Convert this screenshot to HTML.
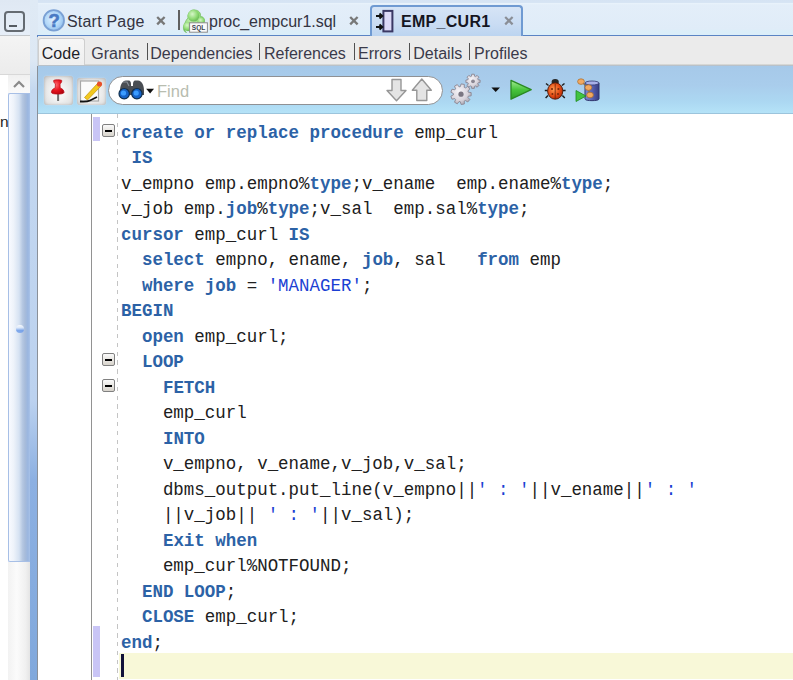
<!DOCTYPE html>
<html><head><meta charset="utf-8">
<style>
*{margin:0;padding:0;box-sizing:border-box}
html,body{width:793px;height:680px;overflow:hidden;background:#fff;position:relative;font-family:"Liberation Sans",sans-serif}
.a{position:absolute}
/* left panel */
#lp-top{left:0;top:0;width:30px;height:35px;background:linear-gradient(#dfe8f3,#e6eef8)}
#lp-line{left:0;top:35px;width:30px;height:1px;background:#c4c8cc}
#lp-mid{left:0;top:36px;width:30px;height:38px;background:linear-gradient(#f4f4f4,#ececec)}
#lp-line2{left:0;top:74px;width:30px;height:1px;background:#d8d8d8}
#lp-bot{left:0;top:75px;width:30px;height:605px;background:#fff}
#minbtn{left:4px;top:11px;width:21px;height:21px;border:2px solid #656b72;border-radius:4px}
#minbtn i{position:absolute;left:3px;top:12px;width:8px;height:2.4px;background:#555b62}
#sb-up{left:8px;top:75px;width:22px;height:18px;background:linear-gradient(#f0f0f0,#fafafa)}
#thumb{left:8px;top:93px;width:22px;height:469px;border:1px solid #a7bfe6;border-right:none;border-radius:2px 0 0 2px;background:linear-gradient(90deg,#f8faff 0%,#eef3fa 22%,#d6e2f2 48%,#b6c8e2 64%,#a8bcda 76%,#9ab6e0 90%,#a8c2e8 100%)}
#track{left:8px;top:562px;width:22px;height:118px;background:linear-gradient(90deg,#f2f2f2,#fbfbfb 40%,#f0f0f0 80%,#e4e4e4)}
#strip{left:30px;top:0;width:8px;height:680px;background:linear-gradient(#dfeaf5 0,#dde8f4 60px,#c4d8f0 90px,#bcd2ef 400px,#8cb0e2 480px,#80a8dc 680px)}
#strip-l{left:37px;top:66px;width:1px;height:614px;background:#8a9098}
#strip-l2{left:37px;top:36px;width:1px;height:30px;background:#d0d8e0}
/* tab bar */
#tabbar{left:38px;top:0;width:755px;height:36px;background:linear-gradient(#d5e3f3 0,#d7e5f4 2.5px,#e8f2fb 3.5px,#e3eef9 5px,#e0ecf8 29px,#dbeef9 31px,#dbeef9 34px)}
#tabline{left:37px;top:34.5px;width:756px;height:2px;background:#5a84c4}
.tabtxt{position:absolute;font-size:16px;color:#343442;white-space:nowrap;line-height:20px}
.closex{position:absolute;font-size:13px;font-weight:bold;color:#777;line-height:12px}
#acttab{left:370px;top:5px;width:153px;height:31px;border:2px solid #6f9ad2;border-bottom:none;border-radius:4px 4px 0 0;background:linear-gradient(#d6e4f6,#c9dcf3 60%,#bcd4f0)}
/* subtab bar */
#subbar{left:38px;top:36px;width:755px;height:30px;background:#ebebeb}
#subline{left:38px;top:64px;width:755px;height:2px;background:linear-gradient(#e6e2da,#a9b6c4)}
#codetab{left:38px;top:38px;width:47px;height:27px;background:linear-gradient(#f6f6f6,#efefef);border:1px solid #cfcfcf;border-bottom:none;border-radius:3px 3px 0 0}
.sub{position:absolute;top:43.7px;font-size:16px;color:#3a3a4a;line-height:20px;white-space:nowrap}
.sep{position:absolute;top:43px;width:1px;height:17px;background:#505050}
/* toolbar */
#toolbar{left:38px;top:66px;width:755px;height:48px;background:linear-gradient(#a6c9e9 0,#a9cdec 40%,#acd8f2 75%,#b6e4f8 100%)}
#tbline{left:38px;top:113px;width:755px;height:1px;background:#9cc4dc}
.btn{position:absolute;border-radius:3px;background:radial-gradient(ellipse at 50% 55%,#f6f6f6 25%,#e4e4e4 70%,#c8c8c8 100%);box-shadow:0 0 1.5px #d8e4ee, inset 0 0 3px #b4b4b4}
#find{left:108px;top:75.6px;width:335px;height:29px;border:1.7px solid #8f9194;border-radius:15px;background:#fff}
#findtxt{left:157px;top:80.6px;font-size:16.5px;color:#b8bdb0;line-height:20px}
/* editor */
#gutline{left:91px;top:114px;width:1.3px;height:566px;background:#929292}
#dash{left:116.5px;top:114px;width:1.5px;height:566px;background:repeating-linear-gradient(#c4c4c4 0,#c4c4c4 4.4px,transparent 4.4px,transparent 8.8px)}
.lav{position:absolute;left:93px;width:7px;background:#c9c5f6}
#curline{left:119px;top:653px;width:674px;height:26px;background:#f8f8d8}
#caret{left:121px;top:653.5px;width:2.6px;height:23px;background:#12123a}
.fold{position:absolute;left:102px;width:13px;height:13px;border:1px solid #808080;border-radius:2px;background:linear-gradient(#fafafa,#d8d4cc)}
.fold i{position:absolute;left:2px;top:5px;width:7px;height:2px;background:#000}
pre{position:absolute;left:121px;top:120.6px;font-family:"Liberation Mono",monospace;font-size:17.47px;line-height:25.5px;color:#202020}
pre b{color:#2c62a6}
pre s{text-decoration:none;color:#1b3fd3}
</style></head><body>
<!-- left panel -->
<div class="a" id="lp-top"></div>
<div class="a" id="lp-line"></div>
<div class="a" id="lp-mid"></div>
<div class="a" id="lp-line2"></div>
<div class="a" id="lp-bot"></div>
<div class="a" id="minbtn"><i></i></div>
<div class="a" id="sb-up"><svg width="22" height="18" style="position:absolute;left:0;top:0"><path d="M6 12 L11 7 L16 12" fill="none" stroke="#8a8a8a" stroke-width="2.2"/></svg></div>
<div class="a" id="thumb"></div>
<div class="a" id="track"></div>
<div class="a" style="left:15.5px;top:325px;width:8px;height:8px;border-radius:50%;background:linear-gradient(#ffffff 0%,#dce8fa 35%,#6a9ae8 70%,#7aa4ec 100%);opacity:0.85"></div>
<div class="a" style="left:-0.5px;top:112.3px;font-size:15.5px;color:#222;line-height:20px;width:9px;overflow:hidden;text-align:right">n</div>
<div class="a" id="strip"></div>
<div class="a" id="strip-l"></div>
<div class="a" id="strip-l2"></div>

<!-- tab bar -->
<div class="a" id="tabbar"></div>
<div class="a" id="tabline"></div>
<div class="a" id="acttab"></div>
<svg class="a" style="left:42px;top:8px" width="24" height="25" viewBox="0 0 24 25">
<defs><radialGradient id="hg" cx="0.45" cy="0.45" r="0.6"><stop offset="0" stop-color="#dff0ff"/><stop offset="0.6" stop-color="#b4d8f8"/><stop offset="1" stop-color="#8cbcec"/></radialGradient></defs>
<circle cx="11.8" cy="12.4" r="10.2" fill="url(#hg)" stroke="#7aa0d4" stroke-width="1.8"/>
<text x="12.2" y="19" text-anchor="middle" font-family="Liberation Sans" font-weight="bold" font-size="18.5" fill="#4a7ac4" stroke="#4a7ac4" stroke-width="0.6">?</text>
</svg>
<div class="tabtxt" style="left:67px;top:12px;letter-spacing:0.2px">Start Page</div>
<svg class="a" style="left:155px;top:15px" width="12" height="11"><path d="M2.2 2 L9.6 9.4 M9.6 2 L2.2 9.4" stroke="#787878" stroke-width="2.3"/></svg>
<div class="a" style="left:178.3px;top:10px;width:1.3px;height:19.5px;background:#606060"></div>
<svg class="a" style="left:182px;top:8px" width="28" height="26" viewBox="0 0 28 26">
<defs><radialGradient id="gg" cx="0.4" cy="0.35" r="0.7"><stop offset="0" stop-color="#d6f6c8"/><stop offset="0.6" stop-color="#8fda74"/><stop offset="1" stop-color="#62b450"/></radialGradient></defs>
<path d="M6 10 C5 5 9 1 13 2 C17 2.5 19 5 18.5 8.5 C21.5 8.5 23 11 22 14 L16 17 L8 16 C3 17 1.5 22 4.5 24.5 C1 24 0.5 18 3 15 C3.5 13 5 11 6 10 Z" fill="url(#gg)" stroke="#79c064" stroke-width="0.8"/>
<circle cx="11.5" cy="7.8" r="5.8" fill="url(#gg)"/>
<circle cx="6" cy="18.6" r="4.6" fill="url(#gg)"/>
<circle cx="19.2" cy="13.2" r="3.6" fill="url(#gg)"/>
<rect x="7.6" y="14.8" width="17.8" height="9.4" fill="#fbfbfb" stroke="#8c8c8c" stroke-width="1"/>
<text x="16.5" y="22.4" text-anchor="middle" font-family="Liberation Sans" font-weight="bold" font-size="7.6" textLength="13.5" lengthAdjust="spacingAndGlyphs" fill="#3a4450">SQL</text>
</svg>
<div class="tabtxt" style="left:209px;top:12px">proc_empcur1.sql</div>
<svg class="a" style="left:348px;top:15px" width="12" height="11"><path d="M2.2 2 L9.6 9.4 M9.6 2 L2.2 9.4" stroke="#787878" stroke-width="2.3"/></svg>
<svg class="a" style="left:374px;top:8px" width="22" height="26" viewBox="0 0 22 26">
<rect x="9.4" y="2.9" width="9" height="20.5" fill="#dcd9f7" stroke="#3a3864" stroke-width="2"/>
<path d="M2 8 H8 M5.5 5.6 L8.2 8 L5.5 10.4" stroke="#111" stroke-width="2" fill="none"/>
<path d="M2 19 H8 M5.5 16.6 L8.2 19 L5.5 21.4" stroke="#111" stroke-width="2" fill="none"/>
</svg>
<div class="tabtxt" style="left:401px;top:12px;font-weight:bold;color:#15151f;letter-spacing:0.3px">EMP_CUR1</div>
<svg class="a" style="left:503px;top:15px" width="12" height="11"><path d="M2.2 2 L9.6 9.4 M9.6 2 L2.2 9.4" stroke="#8a8e96" stroke-width="2.2"/></svg>

<!-- subtab bar -->
<div class="a" id="subbar"></div>
<div class="a" id="subline"></div>
<div class="a" id="codetab"></div>
<div class="sub" style="left:41.8px;color:#1e1e28">Code</div>
<div class="sub" style="left:91.3px">Grants</div>
<div class="sub" style="left:150.3px">Dependencies</div>
<div class="sub" style="left:264.0px">References</div>
<div class="sub" style="left:358.0px">Errors</div>
<div class="sub" style="left:413.3px">Details</div>
<div class="sub" style="left:474.1px">Profiles</div>
<div class="sep" style="left:147px"></div>
<div class="sep" style="left:259px"></div>
<div class="sep" style="left:354px"></div>
<div class="sep" style="left:409px"></div>
<div class="sep" style="left:469px"></div>

<!-- toolbar -->
<div class="a" id="toolbar"></div>
<div class="a" id="tbline"></div>
<div class="btn" style="left:44px;top:76px;width:29px;height:29px"></div>
<svg class="a" style="left:44px;top:76px" width="29" height="29" viewBox="0 0 29 29">
<defs><radialGradient id="png" cx="0.35" cy="0.35" r="0.8"><stop offset="0" stop-color="#ff6a70"/><stop offset="0.5" stop-color="#e8141e"/><stop offset="1" stop-color="#a8000c"/></radialGradient></defs>
<rect x="13.1" y="17" width="2" height="8" fill="#707070"/>
<path d="M9.6 4.6 C9.6 3.6 17.8 3.6 17.8 4.6 C17.8 6.5 16.6 7.6 16 8 L16.2 12 C18.8 12.8 20.2 14.6 20 16.6 C19.6 18.6 8 18.6 7.4 16.6 C7.2 14.6 8.6 12.8 11.2 12 L11.4 8 C10.8 7.6 9.6 6.5 9.6 4.6 Z" fill="url(#png)" stroke="#b80a14" stroke-width="0.7"/>
</svg>
<div class="btn" style="left:77px;top:78px;width:29px;height:27px"></div>
<svg class="a" style="left:77px;top:76px" width="29" height="29" viewBox="0 0 29 29">
<rect x="3.5" y="5" width="18" height="20" fill="#fbfbfb" stroke="#a8a8a8" stroke-width="1.2"/>
<path d="M7.5 21.5 L20.5 7.5 L23.5 10.5 L10.5 24 Z" fill="#f2c81e" stroke="#c89a10" stroke-width="0.8"/>
<circle cx="22.5" cy="8" r="2.6" fill="#e8502a"/>
<path d="M3 25.5 Q10 26 13 24.5 T20 21" stroke="#111" stroke-width="1.8" fill="none"/>
</svg>
<div class="a" id="find"></div>
<svg class="a" style="left:117px;top:78px" width="40" height="24" viewBox="0 0 40 24">
<path d="M3 13 C3 7 5 3 9 2.5 L12 2.5 C13 2.5 14 4 14 6 L14 8 L16 8 L16 6 C16 4 17 2.5 18 2.5 L21 2.5 C25 3 27 7 27 13 L27 17 L3 17 Z" fill="#4a4e54"/>
<path d="M6 4 L10 4 L12 8" stroke="#8a9098" stroke-width="1.2" fill="none"/>
<circle cx="7.2" cy="15.7" r="5.2" fill="#1462c8" stroke="#10304e" stroke-width="1.2"/>
<circle cx="19.9" cy="15.7" r="5.2" fill="#1462c8" stroke="#10304e" stroke-width="1.2"/>
<circle cx="6.5" cy="15" r="2.6" fill="#3a9cff"/>
<circle cx="19.2" cy="15" r="2.6" fill="#3a9cff"/>
<path d="M29.2 10.8 H37 L33.1 15.4 Z" fill="#111"/>
</svg>
<div class="a" id="findtxt">Find</div>
<svg class="a" style="left:384px;top:77px" width="52" height="27" viewBox="0 0 52 27">
<path d="M8 2.5 H17 V13.5 H22 L12.5 23.8 L3 13.5 H8 Z" fill="#e4e4e4" stroke="#969696" stroke-width="1.4" stroke-linejoin="round"/>
<path d="M37.8 2 L47.3 13.3 H42.8 V23.5 H32.8 V13.3 H28.3 Z" fill="#e4e4e4" stroke="#969696" stroke-width="1.4" stroke-linejoin="round"/>
</svg>
<svg class="a" style="left:447px;top:72px" width="56" height="36" viewBox="0 0 56 36">
<defs><radialGradient id="grg" cx="0.4" cy="0.35" r="0.75"><stop offset="0" stop-color="#f6f4f8"/><stop offset="0.6" stop-color="#d8d4dc"/><stop offset="1" stop-color="#a09ca8"/></radialGradient></defs>
<path d="M31.07 7.74 L33.09 8.03 L33.09 10.57 L31.07 10.86 L30.68 11.78 L31.91 13.42 L30.12 15.21 L28.48 13.98 L27.56 14.37 L27.27 16.39 L24.73 16.39 L24.44 14.37 L23.52 13.98 L21.88 15.21 L20.09 13.42 L21.32 11.78 L20.93 10.86 L18.91 10.57 L18.91 8.03 L20.93 7.74 L21.32 6.82 L20.09 5.18 L21.88 3.39 L23.52 4.62 L24.44 4.23 L24.73 2.21 L27.27 2.21 L27.56 4.23 L28.48 4.62 L30.12 3.39 L31.91 5.18 L30.68 6.82 Z" fill="url(#grg)" stroke="#8a8692" stroke-width="0.9"/><circle cx="26" cy="9.3" r="1.9" fill="#8a8692"/>
<path d="M21.33 20.21 L24.17 20.59 L24.17 23.81 L21.33 24.19 L20.90 25.39 L22.83 27.50 L20.76 29.97 L18.34 28.44 L17.24 29.08 L17.35 31.94 L14.18 32.50 L13.31 29.77 L12.06 29.55 L10.31 31.82 L7.52 30.20 L8.61 27.56 L7.79 26.58 L4.99 27.19 L3.89 24.17 L6.43 22.84 L6.43 21.56 L3.89 20.23 L4.99 17.21 L7.79 17.82 L8.61 16.84 L7.52 14.20 L10.31 12.58 L12.06 14.85 L13.31 14.63 L14.18 11.90 L17.35 12.46 L17.24 15.32 L18.34 15.96 L20.76 14.43 L22.83 16.90 L20.90 19.01 Z" fill="url(#grg)" stroke="#8a8692" stroke-width="0.9"/><circle cx="14" cy="22.2" r="2.6" fill="#7a7682"/>
<path d="M44.4 15.4 H53 L48.7 20 Z" fill="#111"/>
</svg>
<svg class="a" style="left:508px;top:77px" width="98" height="28" viewBox="0 0 98 28">
<defs><linearGradient id="plg" x1="0" y1="0" x2="0" y2="1"><stop offset="0" stop-color="#a4ec94"/><stop offset="0.5" stop-color="#48c43c"/><stop offset="1" stop-color="#2c9c28"/></linearGradient>
<radialGradient id="bug" cx="0.4" cy="0.4" r="0.7"><stop offset="0" stop-color="#ff9a50"/><stop offset="0.6" stop-color="#e24812"/><stop offset="1" stop-color="#a02408"/></radialGradient>
<linearGradient id="cyl" x1="0" y1="0" x2="1" y2="0"><stop offset="0" stop-color="#8088d0"/><stop offset="0.5" stop-color="#5a62b4"/><stop offset="1" stop-color="#363c80"/></linearGradient></defs>
<path d="M3 3.3 L23.2 12.7 L3 22.2 Z" fill="url(#plg)" stroke="#2a8a22" stroke-width="1.3" stroke-linejoin="round"/>
<path d="M40.5 8.5 L38 6.5 M54 8.5 L56.5 6.5 M39.5 13.5 L36.8 13.5 M55 13.5 L57.6 13.5 M40 18.5 L37.6 21 M54.4 18.5 L56.8 21" stroke="#1e1e1e" stroke-width="1.5"/>
<ellipse cx="47.2" cy="5" rx="3.6" ry="3" fill="#262626"/>
<ellipse cx="47.2" cy="14" rx="7.6" ry="8.2" fill="url(#bug)" stroke="#4a1606" stroke-width="0.9"/>
<path d="M47.2 6.5 V22" stroke="#6a2008" stroke-width="0.8"/>
<circle cx="44" cy="12" r="1.1" fill="#7a2a0a"/><circle cx="50.4" cy="12" r="1.1" fill="#7a2a0a"/><circle cx="44.4" cy="17" r="1" fill="#7a2a0a"/><circle cx="50" cy="17" r="1" fill="#7a2a0a"/>
<path d="M77 6 H91 V22 C91 24.2 77 24.2 77 22 Z" fill="url(#cyl)" stroke="#30366e" stroke-width="1"/>
<ellipse cx="84" cy="6" rx="7" ry="2" fill="#a8b0e8" stroke="#30366e" stroke-width="0.8"/>
<path d="M73 4.6 L80 10.6 L82 18" stroke="#8a7040" stroke-width="1.2" fill="none"/>
<ellipse cx="73" cy="4.6" rx="3.4" ry="2.8" fill="#f2a860" stroke="#a86a2a" stroke-width="0.7"/>
<ellipse cx="80.4" cy="10.6" rx="3.4" ry="2.8" fill="#f2a860" stroke="#a86a2a" stroke-width="0.7"/>
<ellipse cx="82" cy="18" rx="3.4" ry="2.8" fill="#f2a860" stroke="#a86a2a" stroke-width="0.7"/>
<path d="M68 13.5 L78 19 L68 24.5 Z" fill="#40c440" stroke="#1e8a1e" stroke-width="0.8"/>
</svg>

<!-- editor -->
<div class="a" id="gutline"></div>
<div class="a" id="dash"></div>
<div class="lav" style="top:117px;height:24px"></div>
<div class="lav" style="top:626px;height:51px"></div>
<div class="a" id="curline"></div>
<div class="fold" style="top:124px"><i></i></div>
<div class="fold" style="top:353px"><i></i></div>
<div class="fold" style="top:379px"><i></i></div>
<pre><b>create or replace procedure</b> emp_curl
 <b>IS</b>
v_empno emp.empno%<b>type</b>;v_ename  emp.ename%<b>type</b>;
v_job emp.<b>job</b>%<b>type</b>;v_sal  emp.sal%<b>type</b>;
<b>cursor</b> emp_curl <b>IS</b>
  <b>select</b> empno, ename, <b>job</b>, sal   <b>from</b> emp
  <b>where job</b> = <s>'MANAGER'</s>;
<b>BEGIN</b>
  <b>open</b> emp_curl;
  <b>LOOP</b>
    <b>FETCH</b>
    emp_curl
    <b>INTO</b>
    v_empno, v_ename,v_job,v_sal;
    dbms_output.put_line(v_empno||<s>' : '</s>||v_ename||<s>' : '</s>
    ||v_job|| <s>' : '</s>||v_sal);
    <b>Exit when</b>
    emp_curl%NOTFOUND;
  <b>END LOOP</b>;
  <b>CLOSE</b> emp_curl;
<b>end</b>;
</pre>
<div class="a" id="caret"></div>
</body></html>
